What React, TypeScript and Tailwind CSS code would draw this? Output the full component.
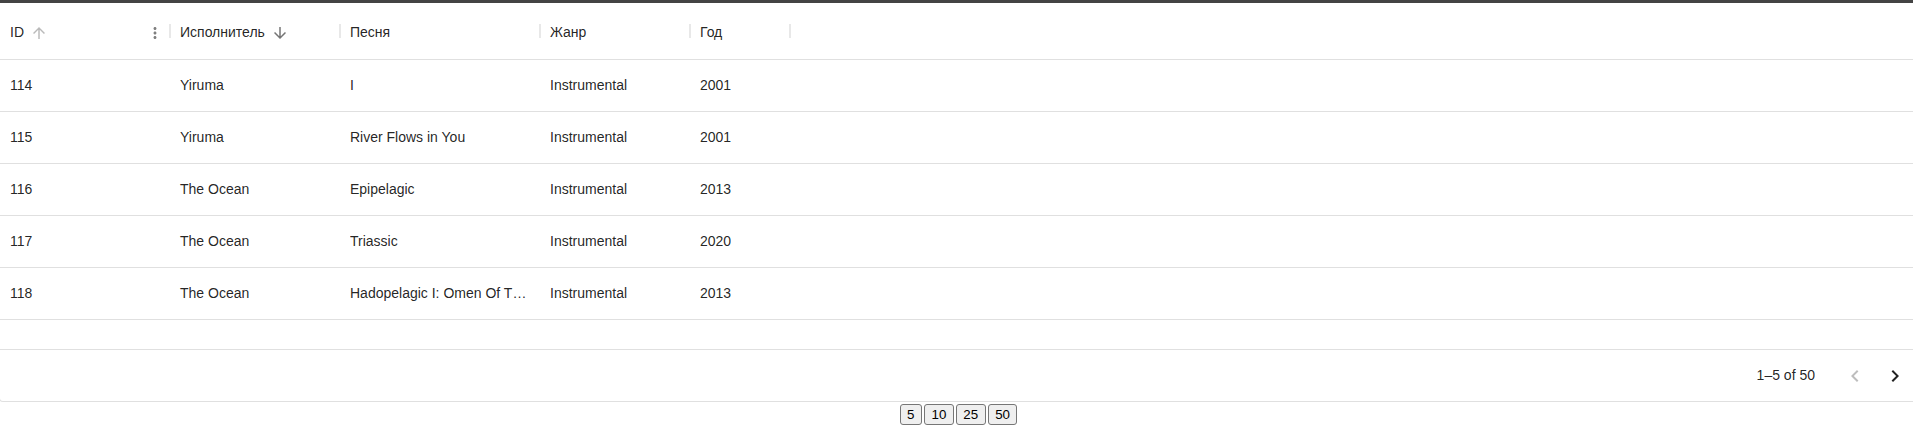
import React from "react";

type Track = { id: number; artist: string; song: string; genre: string; year: number };

const rows: Track[] = [
  { id: 114, artist: "Yiruma", song: "I", genre: "Instrumental", year: 2001 },
  { id: 115, artist: "Yiruma", song: "River Flows in You", genre: "Instrumental", year: 2001 },
  { id: 116, artist: "The Ocean", song: "Epipelagic", genre: "Instrumental", year: 2013 },
  { id: 117, artist: "The Ocean", song: "Triassic", genre: "Instrumental", year: 2020 },
  { id: 118, artist: "The Ocean", song: "Hadopelagic I: Omen Of The Deep", genre: "Instrumental", year: 2013 },
];

const columns = [
  { key: "id", title: "ID", width: "w-[170px]" },
  { key: "artist", title: "Исполнитель", width: "w-[170px]" },
  { key: "song", title: "Песня", width: "w-[200px]" },
  { key: "genre", title: "Жанр", width: "w-[150px]" },
  { key: "year", title: "Год", width: "w-[100px]" },
] as const;

function ArrowUp() {
  return (
    <svg viewBox="0 0 24 24" className="h-[18px] w-[18px] fill-current">
      <path d="M4 12l1.41 1.41L11 7.83V20h2V7.83l5.58 5.59L20 12l-8-8-8 8z" />
    </svg>
  );
}

function ArrowDown() {
  return (
    <svg viewBox="0 0 24 24" className="h-[18px] w-[18px] fill-current">
      <path d="M20 12l-1.41-1.41L13 16.17V4h-2v12.17l-5.58-5.59L4 12l8 8 8-8z" />
    </svg>
  );
}

function Dots() {
  return (
    <svg viewBox="0 0 24 24" className="h-[18px] w-[18px] fill-current">
      <path d="M12 8c1.1 0 2-.9 2-2s-.9-2-2-2-2 .9-2 2 .9 2 2 2zm0 2c-1.1 0-2 .9-2 2s.9 2 2 2 2-.9 2-2-.9-2-2-2zm0 6c-1.1 0-2 .9-2 2s.9 2 2 2 2-.9 2-2-.9-2-2-2z" />
    </svg>
  );
}

function Separator() {
  return (
    <span className="absolute right-[-12px] top-1/2 z-10 flex h-[24px] w-[24px] -translate-y-1/2 items-center justify-center text-[#e0e0e0]">
      <svg viewBox="0 0 24 24" className="h-[24px] w-[24px] fill-current">
        <path d="M11.25 19V5h1.5v14z" />
      </svg>
    </span>
  );
}

function HeaderCell({ title, width, children }: { title: string; width: string; children?: React.ReactNode }) {
  return (
    <div className={`relative flex h-full shrink-0 items-center px-[10px] pt-[3px] ${width}`}>
      <span className="text-[14px] text-[rgba(0,0,0,0.87)]">{title}</span>
      {children}
      <Separator />
    </div>
  );
}

export default function App() {
  return (
    <div className="min-h-[439px] bg-white font-['Liberation_Sans',Arial,sans-serif]">
      <div className="h-[3px] bg-[#444444]" />
      <div className="-ml-px w-[calc(100%+4px)] overflow-hidden rounded-b-[4px] border-x border-b border-[#e0e0e0]">
        {/* header */}
        <div className="flex h-[57px] border-b border-[#e0e0e0]">
          <HeaderCell title="ID" width={columns[0].width}>
            <span className="ml-[1px] flex h-[28px] w-[28px] items-center justify-center text-[rgba(0,0,0,0.27)]">
              <ArrowUp />
            </span>
            <span className="ml-auto mr-[-9px] flex h-[28px] w-[28px] items-center justify-center text-[rgba(0,0,0,0.5)]">
              <Dots />
            </span>
          </HeaderCell>
          <HeaderCell title="Исполнитель" width={columns[1].width}>
            <span className="ml-[1px] flex h-[28px] w-[28px] items-center justify-center text-[rgba(0,0,0,0.54)]">
              <ArrowDown />
            </span>
          </HeaderCell>
          <HeaderCell title="Песня" width={columns[2].width} />
          <HeaderCell title="Жанр" width={columns[3].width} />
          <HeaderCell title="Год" width={columns[4].width} />
        </div>

        {/* body */}
        {rows.map((r) => (
          <div key={r.id} className="flex h-[52px] border-b border-[#e0e0e0] text-[14px] text-[rgba(0,0,0,0.87)]">
            <div className={`flex shrink-0 items-center px-[10px] ${columns[0].width}`}>{r.id}</div>
            <div className={`flex shrink-0 items-center px-[10px] ${columns[1].width}`}>{r.artist}</div>
            <div className={`flex min-w-0 shrink-0 items-center overflow-hidden px-[10px] ${columns[2].width}`}>
              <span className="min-w-0 truncate">{r.song}</span>
            </div>
            <div className={`flex shrink-0 items-center px-[10px] ${columns[3].width}`}>{r.genre}</div>
            <div className={`flex shrink-0 items-center px-[10px] ${columns[4].width}`}>{r.year}</div>
          </div>
        ))}
        <div className="h-[29px]" />

        {/* footer */}
        <div className="flex h-[52px] items-center justify-end border-t border-[#e0e0e0]">
          <span className="text-[14px] text-[rgba(0,0,0,0.87)]">1–5 of 50</span>
          <div className="ml-[20px] flex items-center">
            <span className="flex h-[40px] w-[40px] items-center justify-center text-[rgba(0,0,0,0.26)]">
              <svg viewBox="0 0 24 24" className="h-[24px] w-[24px] fill-current">
                <path d="M15.41 16.59 10.83 12l4.58-4.59L14 6l-6 6 6 6 1.41-1.41z" />
              </svg>
            </span>
            <span className="flex h-[40px] w-[40px] items-center justify-center text-[#222]">
              <svg viewBox="0 0 24 24" className="h-[24px] w-[24px] fill-current">
                <path d="M8.59 16.59 13.17 12 8.59 7.41 10 6l6 6-6 6-1.41-1.41z" />
              </svg>
            </span>
          </div>
        </div>
      </div>

      <div className="mt-[2px] flex justify-center gap-[2px] pl-[4px] text-[13.33px] text-black">
        {[5, 10, 25, 50].map((n) => (
          <button
            key={n}
            className="rounded-[3px] border border-[#767676] bg-[#efefef] px-[6.5px] py-[1.5px] leading-[16px]"
          >
            {n}
          </button>
        ))}
      </div>
    </div>
  );
}
